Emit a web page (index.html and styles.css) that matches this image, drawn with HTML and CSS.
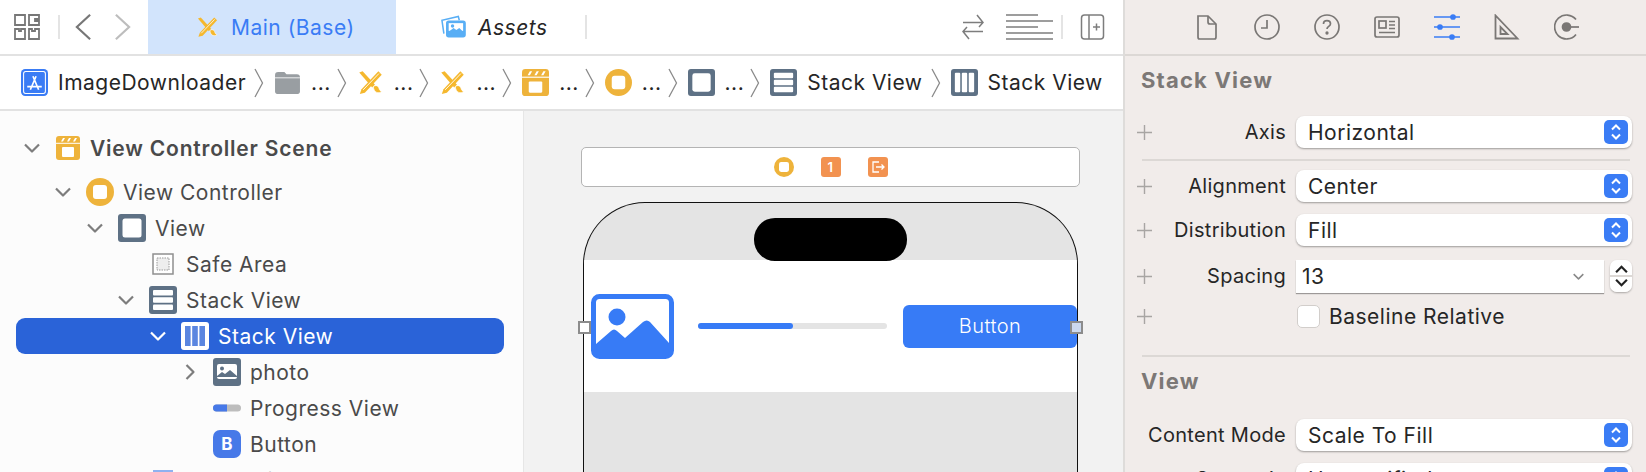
FILE: index.html
```html
<!DOCTYPE html>
<html lang="en">

<head>
    <meta charset="UTF-8">
    <title>Main (Base)</title>
    <link rel="stylesheet" href="styles.css">
</head>

<body>
    <svg class="defs" width="0" height="0">
        <symbol id="i-wand" viewBox="0 0 24 24">
            <path d="M2 3l3-1 11 12-2.500 2.500z" fill="#f5b82e" />
            <path d="M19 2l3 3L7 21l-4.500 1.200L4 18z" fill="#f5b82e" />
            <path d="M5.500 18.500L19.500 4" stroke="#fff" stroke-width=".8" />
            <path d="M14.500 15.500c2.500-1.500 4.500-.5 5 1.500.4 1.800 1.300 2.600 2.500 3-2.500 2-7 1.500-7.500-4.500z" fill="#f5b82e" stroke="#fff" stroke-width=".6" />
        </symbol>
        <symbol id="i-scene" viewBox="0 0 24 24">
            <rect width="24" height="24" rx="3" fill="#eeb33b" />
            <path d="M0 7.300h24" stroke="#fff" stroke-width="1" />
            <path d="M5 5.500l2-3.500h2l-2 3.500zM11 5.500l2-3.500h2l-2 3.500zM17 5.500l2-3.500h2l-2 3.500z" fill="#fff" />
            <rect x="6" y="11" width="12" height="10" rx="1" fill="#fff" />
        </symbol>
        <symbol id="i-vc" viewBox="0 0 28 28">
            <circle cx="14" cy="14" r="14" fill="#eeb33b" />
            <rect x="7" y="7" width="14" height="14" rx="3" fill="#fff" />
        </symbol>
        <symbol id="i-view" viewBox="0 0 28 28">
            <rect width="28" height="28" rx="3" fill="#5e7185" />
            <rect x="4.500" y="4.500" width="19" height="19" rx="2.500" fill="#fff" />
        </symbol>
        <symbol id="i-hstack" viewBox="0 0 28 28">
            <rect width="28" height="28" rx="3" fill="#5e7185" />
            <rect x="4" y="4" width="20" height="5.600" rx="1" fill="#fff" />
            <rect x="4" y="11.200" width="20" height="5.600" rx="1" fill="#fff" />
            <rect x="4" y="18.400" width="20" height="5.600" rx="1" fill="#fff" />
        </symbol>
        <symbol id="i-vstack" viewBox="0 0 28 28">
            <rect width="28" height="28" rx="3" fill="#5e7185" />
            <rect x="4" y="4" width="5.600" height="20" rx="1" fill="#fff" />
            <rect x="11.200" y="4" width="5.600" height="20" rx="1" fill="#fff" />
            <rect x="18.400" y="4" width="5.600" height="20" rx="1" fill="#fff" />
        </symbol>
        <symbol id="i-vstack-on" viewBox="0 0 28 28">
            <rect width="28" height="28" rx="3" fill="#fff" />
            <rect x="4" y="4" width="5.600" height="20" fill="#5b86e0" />
            <rect x="11.200" y="4" width="5.600" height="20" fill="#5b86e0" />
            <rect x="18.400" y="4" width="5.600" height="20" fill="#5b86e0" />
        </symbol>
        <symbol id="i-photo" viewBox="0 0 28 28">
            <rect width="28" height="28" rx="3" fill="#5e7185" />
            <rect x="4" y="6" width="20" height="15" rx="2" fill="#fff" />
            <circle cx="9" cy="10.500" r="2" fill="#5e7185" />
            <path d="M4 18l5-4 3 2 5-4 7 6v1H4z" fill="#5e7185" />
        </symbol>
        <symbol id="i-chev" viewBox="0 0 16 16">
            <path d="M1 4.500l7 7 7-7" fill="none" stroke="currentColor" stroke-width="2.200" stroke-linejoin="round" />
        </symbol>
        <symbol id="i-crumb" viewBox="0 0 10 30">
            <path d="M1 1l7.500 14L1 29" fill="none" stroke="#8a8a8a" stroke-width="1.300" />
        </symbol>
        <symbol id="i-updown" viewBox="0 0 24 24">
            <rect width="24" height="24" rx="5" fill="#3a7cf5" />
            <path d="M8 9.500l4-4 4 4M8 14.500l4 4 4-4" fill="none" stroke="#fff" stroke-width="2" />
        </symbol>
        <symbol id="i-plus" viewBox="0 0 14 14">
            <path d="M7 0v14M0 7h14" stroke="#a8a5a3" stroke-width="1.300" />
        </symbol>
    </svg>

    <div class="app">
        <div class="main">
            <div class="toolbar">
                <svg class="grid-icon" viewBox="0 0 26 26" fill="none" stroke="#777" stroke-width="1.800">
                    <path d="M1 1h10v10H1zM15 1h10v4h-4v2h4v4H15zM1 15h4v2h2v-2h4v10H1zM15 15h3v2h3v-2h4v10H15z" />
                </svg>
                <span class="tool-sep"></span>
                <svg class="nav-arrow" viewBox="0 0 18 30" fill="none" stroke="#777" stroke-width="2.300">
                    <path d="M16 2L2 15l14 13" />
                </svg>
                <svg class="nav-arrow nav-next" viewBox="0 0 18 30" fill="none" stroke="#bdbdbd" stroke-width="2.300">
                    <path d="M2 2l14 13L2 28" />
                </svg>
                <div class="tab tab-active">
                    <svg class="tab-icon"><use href="#i-wand" /></svg>
                    <span>Main (Base)</span>
                </div>
                <div class="tab tab-assets">
                    <svg class="assets-icon" viewBox="0 0 26 26" fill="none" stroke="#58aef5" stroke-width="1.600">
                        <rect x="6" y="7" width="19" height="16" rx="2" fill="#58aef5" />
                        <path d="M3 20L1 6l17-4 1 4" />
                        <rect x="8" y="9" width="15" height="8" fill="#fff" stroke="none" />
                        <circle cx="12" cy="12" r="1.800" fill="#58aef5" stroke="none" />
                        <path d="M8 18l5-4 3 2 3-2 4 4z" fill="#58aef5" stroke="none" />
                    </svg>
                    <i>Assets</i>
                </div>
                <span class="tool-sep sep-after-tabs"></span>
                <svg class="swap-icon" viewBox="0 0 24 28" fill="none" stroke="#7d7d7d" stroke-width="1.500">
                    <path d="M2 9.500h20M16 2l6 7.500-4 4.500M22 18.500H2M8 26l-6-7.500 4-4.500" />
                </svg>
                <svg class="lines-icon" viewBox="0 0 47 26" stroke="#7d7d7d" stroke-width="1.600">
                    <path d="M0 1h32M0 7h47M0 13h32M0 19h47M0 25h47" />
                </svg>
                <span class="tool-sep sep-panel"></span>
                <svg class="panel-icon" viewBox="0 0 24 26" fill="none" stroke="#7d7d7d" stroke-width="1.500">
                    <rect x="1" y="1" width="22" height="24" rx="3" />
                    <path d="M8.500 1v24M12.500 13h7M16 9.500v7" />
                </svg>
            </div>

            <div class="jumpbar">
                <svg class="crumb-icon" viewBox="0 0 26 26">
                    <rect width="26" height="26" rx="4" fill="#3a7cf5" />
                    <rect x="2.500" y="2.500" width="21" height="21" rx="2" fill="none" stroke="#fff" stroke-width="1" />
                    <path d="M9 20l5.500-13M17 20L11.500 7M6 17h14" stroke="#fff" stroke-width="1.600" />
                </svg>
                <span class="crumb-text">ImageDownloader</span>
                <svg class="crumb-sep"><use href="#i-crumb" /></svg>
                <svg class="crumb-icon" viewBox="0 0 26 26">
                    <path d="M1 6c0-2 1-3 3-3h6l2 2h10c2 0 3 1 3 3v14c0 1-1 2-2 2H3c-1 0-2-1-2-2z" fill="#999ea2" />
                    <path d="M1 8.500h24" stroke="#fff" stroke-width=".8" />
                </svg>
                <span class="crumb-more">...</span>
                <svg class="crumb-sep"><use href="#i-crumb" /></svg>
                <svg class="crumb-icon"><use href="#i-wand" /></svg>
                <span class="crumb-more">...</span>
                <svg class="crumb-sep"><use href="#i-crumb" /></svg>
                <svg class="crumb-icon"><use href="#i-wand" /></svg>
                <span class="crumb-more">...</span>
                <svg class="crumb-sep"><use href="#i-crumb" /></svg>
                <svg class="crumb-icon"><use href="#i-scene" /></svg>
                <span class="crumb-more">...</span>
                <svg class="crumb-sep"><use href="#i-crumb" /></svg>
                <svg class="crumb-icon"><use href="#i-vc" /></svg>
                <span class="crumb-more">...</span>
                <svg class="crumb-sep"><use href="#i-crumb" /></svg>
                <svg class="crumb-icon"><use href="#i-view" /></svg>
                <span class="crumb-more">...</span>
                <svg class="crumb-sep"><use href="#i-crumb" /></svg>
                <svg class="crumb-icon"><use href="#i-hstack" /></svg>
                <span class="crumb-text">Stack View</span>
                <svg class="crumb-sep"><use href="#i-crumb" /></svg>
                <svg class="crumb-icon"><use href="#i-vstack" /></svg>
                <span class="crumb-text">Stack View</span>
            </div>

            <div class="split">
                <div class="tree">
                    <div class="row row-scene lvl-0">
                        <svg class="chev"><use href="#i-chev" /></svg>
                        <svg class="scene-icon"><use href="#i-scene" /></svg>
                        <b>View Controller Scene</b>
                    </div>
                    <div class="row lvl-1">
                        <svg class="chev"><use href="#i-chev" /></svg>
                        <svg class="node-icon"><use href="#i-vc" /></svg>
                        <span>View Controller</span>
                    </div>
                    <div class="row lvl-2">
                        <svg class="chev"><use href="#i-chev" /></svg>
                        <svg class="node-icon"><use href="#i-view" /></svg>
                        <span>View</span>
                    </div>
                    <div class="row lvl-3">
                        <span class="chev"></span>
                        <svg class="node-icon" viewBox="0 0 28 28">
                            <rect x="4" y="4" width="20" height="20" fill="#fff" stroke="#8f8f8f" stroke-width="1.500" />
                            <rect x="8" y="8" width="12" height="12" fill="#eee" stroke="#999" stroke-width="1" stroke-dasharray="1.500 1" />
                        </svg>
                        <span>Safe Area</span>
                    </div>
                    <div class="row lvl-3">
                        <svg class="chev"><use href="#i-chev" /></svg>
                        <svg class="node-icon"><use href="#i-hstack" /></svg>
                        <span>Stack View</span>
                    </div>
                    <div class="row row-selected lvl-4">
                        <svg class="chev"><use href="#i-chev" /></svg>
                        <svg class="node-icon"><use href="#i-vstack-on" /></svg>
                        <span>Stack View</span>
                    </div>
                    <div class="row lvl-5">
                        <svg class="chev chev-closed"><use href="#i-chev" /></svg>
                        <svg class="node-icon"><use href="#i-photo" /></svg>
                        <span>photo</span>
                    </div>
                    <div class="row lvl-5">
                        <span class="chev"></span>
                        <svg class="node-icon" viewBox="0 0 28 28">
                            <rect y="10.500" width="28" height="7" rx="3.500" fill="#bdbdbd" />
                            <path d="M3.500 10.500H14v7H3.500a3.500 3.500 0 010-7z" fill="#4779e8" />
                        </svg>
                        <span>Progress View</span>
                    </div>
                    <div class="row lvl-5">
                        <span class="chev"></span>
                        <span class="btn-badge">B</span>
                        <span>Button</span>
                    </div>
                    <div class="row lvl-3">
                        <span class="chev"></span>
                        <svg class="node-icon" viewBox="0 0 28 28">
                            <rect x="4" y="4" width="20" height="20" fill="#8fb1f0" />
                        </svg>
                        <span>Constraints</span>
                    </div>
                </div>

                <div class="canvas">
                    <div class="scene-bar">
                        <svg class="bar-icon"><use href="#i-vc" /></svg>
                        <span class="bar-badge">1</span>
                        <span class="bar-badge">
                            <svg class="bar-exit" viewBox="0 0 14 14" fill="none" stroke="#fff" stroke-width="1.300">
                                <path d="M8 2H2v10h6M5 7h8M10.500 4.500L13 7l-2.500 2.500" />
                            </svg>
                        </span>
                    </div>
                    <div class="phone">
                        <div class="phone-top">
                            <div class="notch"></div>
                        </div>
                        <div class="stack">
                            <svg class="stack-image" viewBox="0 0 83 65">
                                <rect x="2.500" y="2.500" width="78" height="60" rx="6" fill="#fff" stroke="#377bf6" stroke-width="5" />
                                <circle cx="26" cy="23" r="8.500" fill="#377bf6" />
                                <path d="M5 50l15-13c2-2 4-2 6 0l8 7 18-16c2.500-2 5-2 7 0l19 21v11c0 2-2 4-4 4H9c-2 0-4-2-4-4z" fill="#377bf6" />
                            </svg>
                            <div class="progress">
                                <div class="progress-fill"></div>
                            </div>
                            <div class="stack-button">Button</div>
                        </div>
                    </div>
                    <span class="handle handle-left"></span>
                    <span class="handle handle-right"></span>
                </div>
            </div>
        </div>

        <div class="inspector">
            <div class="insp-tabs">
                <svg class="insp-icon" viewBox="0 0 26 26" fill="none" stroke="#7a7775" stroke-width="1.700">
                    <path d="M4 2h10l8 8v13c0 1-.5 2-1.500 2h-15c-1 0-1.500-1-1.500-2z" />
                    <path d="M14 2v6c0 1.500.5 2 2 2h6" />
                </svg>
                <svg class="insp-icon" viewBox="0 0 26 26" fill="none" stroke="#7a7775" stroke-width="1.700">
                    <circle cx="13" cy="13" r="12" />
                    <path d="M13 6v8H7" />
                </svg>
                <svg class="insp-icon" viewBox="0 0 26 26" fill="none" stroke="#7a7775" stroke-width="1.700">
                    <circle cx="13" cy="13" r="12" />
                    <path d="M9.500 10c0-2 1.500-3.300 3.500-3.300s3.500 1.300 3.500 3c0 2.800-3.500 2.500-3.500 5.300" />
                    <circle cx="13" cy="19" r=".8" fill="#7a7775" />
                </svg>
                <svg class="insp-icon" viewBox="0 0 26 26" fill="none" stroke="#7a7775" stroke-width="1.700">
                    <rect x="1" y="3" width="24" height="20" rx="2" />
                    <rect x="5" y="7" width="7" height="7" />
                    <path d="M15 7.500h6M15 11h6M15 14.500h6M5 18.500h16" stroke-width="1.300" />
                </svg>
                <svg class="insp-icon" viewBox="0 0 26 26" fill="#3a7cf5" stroke="#3a7cf5" stroke-width="1.700">
                    <path d="M0 3h26M0 13h26M0 23h26" />
                    <circle cx="19" cy="3" r="2" />
                    <circle cx="6" cy="13" r="2" />
                    <circle cx="18" cy="23" r="2" />
                </svg>
                <svg class="insp-icon" viewBox="0 0 26 26" fill="none" stroke="#7a7775" stroke-width="1.800">
                    <path d="M1.500 1.500v23h22z" />
                    <path d="M6.500 13v7h7z" />
                </svg>
                <svg class="insp-icon" viewBox="0 0 26 26" fill="none" stroke="#7a7775" stroke-width="1.700">
                    <path d="M22 5.500A12 12 0 1022 20.500" />
                    <circle cx="12.500" cy="13" r="4" fill="#7a7775" />
                    <path d="M15 13h10" />
                </svg>
            </div>

            <div class="section-body">
                <h3 class="section-title">Stack View</h3>
                <div class="field field-axis">
                    <svg class="plus"><use href="#i-plus" /></svg>
                    <label>Axis</label>
                    <div class="popup">Horizontal<svg class="popup-arrows"><use href="#i-updown" /></svg></div>
                </div>
                <hr class="rule rule-axis">
                <div class="field">
                    <svg class="plus"><use href="#i-plus" /></svg>
                    <label>Alignment</label>
                    <div class="popup">Center<svg class="popup-arrows"><use href="#i-updown" /></svg></div>
                </div>
                <div class="field">
                    <svg class="plus"><use href="#i-plus" /></svg>
                    <label>Distribution</label>
                    <div class="popup">Fill<svg class="popup-arrows"><use href="#i-updown" /></svg></div>
                </div>
                <div class="field field-spacing">
                    <svg class="plus"><use href="#i-plus" /></svg>
                    <label>Spacing</label>
                    <div class="combo">13
                        <svg class="combo-chev"><use href="#i-chev" /></svg>
                    </div>
                    <div class="stepper">
                        <svg viewBox="0 0 12 8" fill="none" stroke="#222" stroke-width="2"><path d="M1 6.500l5-5 5 5" /></svg>
                        <svg viewBox="0 0 12 8" fill="none" stroke="#222" stroke-width="2"><path d="M1 1.500l5 5 5-5" /></svg>
                    </div>
                </div>
                <div class="field field-check">
                    <svg class="plus"><use href="#i-plus" /></svg>
                    <label></label>
                    <span class="checkbox"></span>
                    <span>Baseline Relative</span>
                </div>
                <hr class="rule rule-view">
                <h3 class="section-title title-view">View</h3>
                <div class="field">
                    <label>Content Mode</label>
                    <div class="popup">Scale To Fill<svg class="popup-arrows"><use href="#i-updown" /></svg></div>
                </div>
                <div class="field">
                    <label>Semantic</label>
                    <div class="popup">Unspecified<svg class="popup-arrows"><use href="#i-updown" /></svg></div>
                </div>
            </div>
        </div>
    </div>
</body>

</html>
```

FILE: styles.css
```css
* {
    box-sizing: border-box;
}

html,
body {
    margin: 0;
    height: 472px;
    overflow: hidden;
}

body {
    font-family: Inter, "Liberation Sans", sans-serif;
    font-size: 21px;
    letter-spacing: .5px;
    color: #262626;
    background: #fff;
}

.defs {
    position: absolute;
}

.app {
    display: grid;
    grid-template-columns: 1125px 1fr;
    height: 472px;
}

.main {
    display: flex;
    flex-direction: column;
    min-width: 0;
    border-right: 2px solid #dedcda;
}

/* top bar */
.toolbar {
    display: flex;
    align-items: center;
    height: 56px;
    padding-left: 14px;
    border-bottom: 2px solid #e2e2e2;
}

.grid-icon {
    width: 26px;
    height: 26px;
}

.tool-sep {
    width: 2px;
    height: 24px;
    margin: 0 15px 0 18px;
    background: #e4e4e4;
}

.nav-arrow {
    width: 17px;
    height: 30px;
    flex: none;
}

.nav-next {
    margin-left: 22px;
    margin-right: 17px;
}

.tab {
    display: flex;
    align-items: center;
    height: 54px;
    white-space: nowrap;
}

.tab-active {
    width: 248px;
    padding-left: 48px;
    gap: 12px;
    background: #d2e4fc;
    color: #3a7cf5;
}

.tab-icon {
    width: 23px;
    height: 24px;
}

.tab-assets {
    width: 189px;
    padding-left: 45px;
    gap: 12px;
}

.assets-icon {
    width: 25px;
    height: 26px;
}

.sep-after-tabs {
    margin: 0 auto 0 0;
}

.swap-icon {
    width: 24px;
    height: 28px;
}

.lines-icon {
    width: 47px;
    height: 26px;
    margin-left: 21px;
}

.sep-panel {
    margin: 0 17px 0 8px;
}

.panel-icon {
    width: 25px;
    height: 26px;
    margin-right: 18px;
}

/* breadcrumb */
.jumpbar {
    display: flex;
    align-items: center;
    height: 55px;
    padding-left: 21px;
    border-bottom: 2px solid #e2e2e2;
    white-space: nowrap;
}

.crumb-icon {
    width: 27px;
    height: 27px;
    flex: none;
}

.crumb-text {
    margin-left: 10px;
    margin-right: 8px;
}

.crumb-more {
    width: 17px;
    margin-left: 10px;
    margin-right: 8.700px;
}

.crumb-sep {
    width: 10px;
    height: 30px;
    flex: none;
    margin-right: 10px;
}

/* outline */
.split {
    display: flex;
    flex: 1;
    min-height: 0;
}

.tree {
    width: 524px;
    flex: none;
    padding: 15px 19px 0 16px;
    background: #fcfcfc;
    border-right: 1px solid #e6e6e6;
    color: #4a4a4a;
}

.row {
    display: flex;
    align-items: center;
    height: 36px;
    gap: 9px;
    border-radius: 9px;
    white-space: nowrap;
}

.row-scene {
    height: 44px;
    margin-bottom: 4px;
    gap: 10px;
}

.row-scene b {
    font-weight: 600;
    letter-spacing: .8px;
}

.row-selected {
    background: #2a63d8;
    color: #fff;
}

.lvl-0 {
    padding-left: 8px;
}

.lvl-1 {
    padding-left: 39px;
}

.lvl-2 {
    padding-left: 71px;
}

.lvl-3 {
    padding-left: 102px;
}

.lvl-4 {
    padding-left: 134px;
}

.lvl-5 {
    padding-left: 166px;
}

.chev {
    width: 16px;
    height: 16px;
    flex: none;
    margin-right: 6px;
    color: #7d7d7d;
}

.row-selected .chev {
    color: #fff;
}

.chev-closed {
    transform: rotate(-90deg);
}

.scene-icon {
    width: 24px;
    height: 24px;
    flex: none;
}

.node-icon {
    width: 28px;
    height: 28px;
    flex: none;
}

.btn-badge {
    display: flex;
    align-items: center;
    justify-content: center;
    width: 28px;
    height: 28px;
    flex: none;
    border-radius: 7px;
    background: #4779e8;
    color: #fff;
    font-size: 17px;
    font-weight: 700;
}

/* storyboard canvas */
.canvas {
    flex: 1;
    padding: 36px 43px 0 57px;
    background: #f2f2f2;
    overflow: hidden;
}

.scene-bar {
    display: flex;
    align-items: center;
    justify-content: center;
    gap: 27px;
    height: 40px;
    background: #fff;
    border: 1.500px solid #b4b4b4;
    border-radius: 5px;
}

.bar-icon {
    width: 20px;
    height: 20px;
}

.bar-badge {
    display: flex;
    align-items: center;
    justify-content: center;
    width: 20px;
    height: 20px;
    border-radius: 3px;
    background: #f29250;
    color: #fff;
    font-size: 13px;
    font-weight: 600;
}

.bar-exit {
    width: 14px;
    height: 14px;
}

.phone {
    height: 400px;
    margin: 15px 2px 0;
    overflow: hidden;
    border: 1.500px solid #111;
    border-bottom: 0;
    border-radius: 62px 62px 0 0;
    background: #e4e4e4;
}

.phone-top {
    display: flex;
    justify-content: center;
    height: 57px;
    padding-top: 15px;
}

.notch {
    width: 153px;
    height: 43px;
    border-radius: 21px;
    background: #000;
}

.stack {
    display: flex;
    align-items: center;
    height: 132px;
    padding-left: 7px;
    background: #fff;
}

.stack-image {
    width: 83px;
    height: 65px;
    flex: none;
}

.progress {
    width: 189px;
    height: 6px;
    margin-left: 24px;
    border-radius: 3px;
    background: #e4e4e4;
}

.progress-fill {
    width: 95px;
    height: 6px;
    border-radius: 3px;
    background: #377bf6;
}

.stack-button {
    display: flex;
    align-items: center;
    justify-content: center;
    flex: 1;
    height: 43px;
    margin-left: 16px;
    border-radius: 6px;
    background: #377bf6;
    color: #fff;
    font-size: 20px;
    font-weight: 300;
}

.handle {
    position: absolute;
    top: 321px;
    width: 13px;
    height: 13px;
    border: 2px solid #8c8c8c;
}

.handle-left {
    left: 578px;
    background: #fff;
}

.handle-right {
    left: 1070px;
    background: #ccd9ee;
}

/* inspector */
.inspector {
    min-width: 0;
    background: #f1ecea;
    overflow: hidden;
}

.insp-tabs {
    display: flex;
    align-items: center;
    gap: 34px;
    height: 56px;
    padding-left: 69px;
    border-bottom: 2px solid #dcd8d5;
}

.insp-icon {
    width: 26px;
    height: 26px;
    flex: none;
}

.section-body {
    padding: 11px 14px 0 12px;
}

.section-title {
    margin: 0 0 23px 4px;
    font-size: 22px;
    line-height: 26px;
    font-weight: 700;
    letter-spacing: 1.200px;
    color: #7c7876;
}

.title-view {
    margin-bottom: 25px;
}

.field {
    display: flex;
    align-items: center;
    height: 32px;
    margin-bottom: 12px;
    color: #262626;
}

.field-axis {
    margin-bottom: 11px;
}

.field-spacing {
    margin-top: 14px;
    margin-bottom: 8px;
}

.field label {
    flex: 1;
    text-align: right;
    margin-right: 10px;
    font-size: 20px;
    letter-spacing: .3px;
    white-space: nowrap;
}

.plus {
    width: 15px;
    height: 15px;
    flex: none;
}

.popup {
    display: flex;
    align-items: center;
    justify-content: space-between;
    width: 336px;
    height: 32px;
    flex: none;
    padding: 0 4px 0 12px;
    border-radius: 8px;
    background: #fff;
    box-shadow: 0 1px 2px rgba(0, 0, 0, .35);
}

.popup-arrows {
    width: 24px;
    height: 24px;
}

.rule {
    height: 2px;
    margin: 0 2px 9px 5px;
    border: 0;
    background: #dcd8d5;
}

.rule-view {
    margin-top: 23px;
    margin-bottom: 11px;
}

.combo {
    display: flex;
    align-items: center;
    justify-content: space-between;
    width: 308px;
    height: 33px;
    flex: none;
    padding: 0 20px 0 6px;
    background: #fff;
    box-shadow: 0 1px 1px rgba(0, 0, 0, .35);
}

.combo-chev {
    width: 11px;
    height: 11px;
    color: #888;
}

.stepper {
    display: flex;
    flex-direction: column;
    align-items: center;
    justify-content: space-between;
    width: 22px;
    height: 32px;
    margin-left: 6px;
    padding: 5px 0;
    border-radius: 7px;
    background: linear-gradient(#fff 48%, #dcd8d5 48%, #dcd8d5 52%, #fff 52%);
    box-shadow: 0 1px 2px rgba(0, 0, 0, .3);
}

.stepper svg {
    width: 13px;
    height: 9px;
}

.field-check .checkbox {
    width: 23px;
    height: 23px;
    flex: none;
    margin-right: 9px;
    border-radius: 5px;
    background: #fff;
    border: 1px solid #d2cecb;
}

.field-check label {
    flex: none;
    width: 133px;
    margin-right: 12px;
}
```
